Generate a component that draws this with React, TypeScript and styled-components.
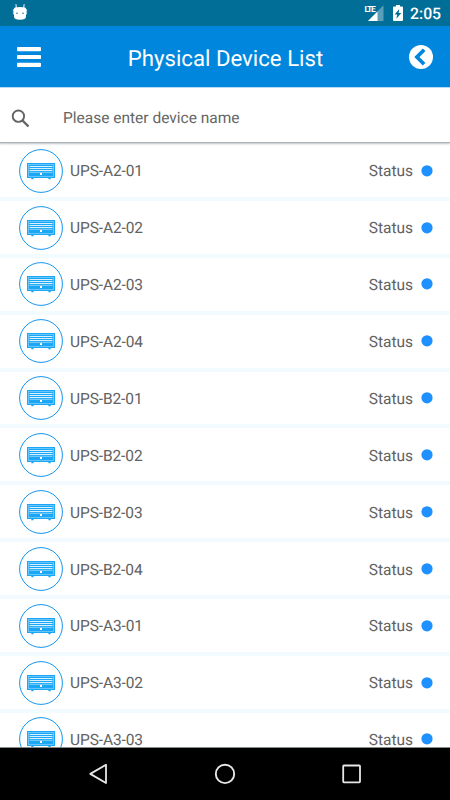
import React from 'react';
import styled, { createGlobalStyle } from 'styled-components';

const GlobalStyle = createGlobalStyle`
  * { box-sizing: border-box; }
  body { margin: 0; background: #fff; font-family: Roboto, sans-serif; text-rendering: geometricPrecision; }
  svg { display: block; flex: none; }
`;

const Screen = styled.div`
  width: 450px;
  height: 800px;
  display: flex;
  flex-direction: column;
  overflow: hidden;
  background: #fff;
`;

const StatusBar = styled.div`
  flex: none;
  height: 26px;
  padding: 0 9px 0 12px;
  display: flex;
  align-items: center;
  justify-content: space-between;
  background: #006e97;
  color: #fff;
`;

const SystemIcons = styled.div`
  display: flex;
  align-items: center;
`;

const BatterySlot = styled.span`
  margin-left: 9px;
`;

const Clock = styled.span`
  margin-left: 7px;
  padding-top: 1px;
  width: 31px;
  font-size: 15.8px;
  line-height: 20px;
  font-weight: 500;
  white-space: nowrap;
`;

const AppBar = styled.header`
  flex: none;
  height: 62px;
  padding: 0 17px;
  display: flex;
  align-items: center;
  justify-content: space-between;
  background: #0087dd;
  border-bottom: 1px solid #b9dcf5;
`;

const Title = styled.h1`
  margin: 0;
  padding: 4px 0 0 1px;
  font-size: 22.2px;
  line-height: 28px;
  font-weight: 400;
  color: #fff;
  white-space: nowrap;
`;

const IconButton = styled.button`
  border: 0;
  padding: 0;
  background: none;
`;

const SearchBar = styled.label`
  flex: none;
  height: 54px;
  padding: 6px 11px 0;
  display: flex;
  align-items: center;
  gap: 33px;
  background: #fff;
  box-shadow: 0 1px 1px #a9b2b8, 0 2px 2px rgba(90, 105, 115, 0.35);
  z-index: 1;
`;

const SearchHint = styled.span`
  font-size: 15.5px;
  line-height: 20px;
  color: #666;
`;

const DeviceList = styled.main`
  flex: 1;
  min-height: 0;
  padding-top: 2px;
  overflow: hidden;
`;

const DeviceRow = styled.div`
  height: 56.875px;
  padding: 0.5px 17px 0 19px;
  display: flex;
  align-items: center;
  border-bottom: 4px solid #f2fbff;
  font-size: 15.5px;
  line-height: 20px;
  color: #626262;
`;

const DeviceName = styled.span`
  flex: 1;
  padding: 1.6px 0 0 7px;
  letter-spacing: -0.1px;
`;

const StatusLabel = styled.span`
  padding-top: 1.6px;
`;

const DotIcon = styled.svg`
  margin-left: 8px;
`;

const NavBar = styled.nav`
  flex: none;
  height: 53px;
  display: flex;
  align-items: center;
  justify-content: space-between;
  padding: 0 86px;
  background: #000;
  border-top: 1px solid #858b87;
`;

const devices = [
  'UPS-A2-01',
  'UPS-A2-02',
  'UPS-A2-03',
  'UPS-A2-04',
  'UPS-B2-01',
  'UPS-B2-02',
  'UPS-B2-03',
  'UPS-B2-04',
  'UPS-A3-01',
  'UPS-A3-02',
  'UPS-A3-03',
];

const AndroidIcon = () => (
  <svg width="16" height="18" viewBox="0 0 16 18">
    <path d="M4.4 4.6 4 .6M11.6 4.6l.5-4" stroke="#d9eef5" strokeWidth="1.1" strokeLinecap="round" />
    <path d="M3 3.5Q8 2.6 13 3.5q1 .2 1 1.4v7.6q0 3.2-6 3.2t-6-3.2V4.9Q2 3.7 3 3.5Z" fill="#fff" />
    <path d="M1.4 5v5.5M14.6 5v5.5" stroke="#b9dbe7" strokeWidth="1" />
    <circle cx="5" cy="9.2" r=".8" fill="#27758f" />
    <circle cx="11" cy="9.2" r=".8" fill="#27758f" />
  </svg>
);

const LteLabel = styled.span`
  align-self: flex-start;
  width: 11px;
  margin: 2px -7.5px 0 0;
  font-size: 8.5px;
  line-height: 10px;
  font-weight: 700;
  letter-spacing: -1.2px;
  z-index: 1;
`;

const SignalIcon = () => (
  <svg width="16" height="16" viewBox="0 0 16 16">
    <path d="M0 16 15.5.3V16Z" fill="#5a9fb9" />
    <path d="M0 16 9.5 6.5V16Z" fill="#fff" />
  </svg>
);

const BatteryIcon = () => (
  <svg width="10" height="16" viewBox="0 0 10 16">
    <path d="M3 0h4v1.6h2q1 0 1 1V15q0 1-1 1H1q-1 0-1-1V2.6q0-1 1-1h2Z" fill="#fff" />
    <path d="M6.2 3.9 1.7 9.6h2.5l-.8 4.2 4.9-5.9H5.7Z" fill="#006e97" />
  </svg>
);

const MenuIcon = () => (
  <svg width="24" height="20" viewBox="0 0 24 20" fill="#fff">
    <rect width="24" height="4.2" rx=".9" />
    <rect y="7.9" width="24" height="4.2" rx=".9" />
    <rect y="15.8" width="24" height="4.2" rx=".9" />
  </svg>
);

const BackCircleIcon = () => (
  <svg width="24" height="24" viewBox="0 0 24 24">
    <circle cx="12" cy="12" r="12" fill="#fff" />
    <path d="m13.8 6.1-5.9 5.9 5.9 5.9" fill="none" stroke="#0087dd" strokeWidth="3.7" strokeLinecap="square" />
  </svg>
);

const SearchIcon = () => (
  <svg width="19" height="19" viewBox="0 0 19 19" fill="none" stroke="#646464">
    <circle cx="7.4" cy="7.2" r="5.7" strokeWidth="1.9" />
    <path d="m11.5 11.5 6 6" strokeWidth="2.4" />
  </svg>
);

const DeviceIcon = () => (
  <svg width="44" height="44" viewBox="0 0 44 44">
    <circle cx="22" cy="22" r="21.4" fill="#fff" stroke="#1495ee" strokeWidth="1" />
    <rect x="8" y="14" width="28" height="15" fill="#1ba6f6" />
    <rect x="9.5" y="15.5" width="25" height="12" fill="none" stroke="#79cdfa" strokeWidth=".8" />
    <path d="M10.5 17.5h23M10.5 19.5h23M10.5 21.5h23" stroke="#d8f1ff" strokeWidth="1" />
    <path d="M10.5 23.3h23" stroke="#a5defc" strokeWidth=".8" />
    <rect x="21" y="24" width="2" height="2" fill="#fff" />
    <path d="M12.3 29.6h2.3M29.4 29.6h2.3" stroke="#1ba6f6" strokeWidth="1.4" />
  </svg>
);

const StatusDot = () => (
  <DotIcon width="12" height="12" viewBox="0 0 12 12">
    <circle cx="6" cy="5.8" r="5.6" fill="#1e90ff" />
  </DotIcon>
);

const BackTriangle = () => (
  <svg width="24" height="24" viewBox="0 0 24 24" fill="none" stroke="#e7e7e7" strokeWidth="1.8">
    <path d="M20 2.8v18.2L4.3 11.9Z" strokeLinejoin="round" />
  </svg>
);

const HomeCircle = () => (
  <svg width="24" height="24" viewBox="0 0 24 24" fill="none" stroke="#e7e7e7" strokeWidth="1.9">
    <circle cx="12" cy="11.9" r="9.2" />
  </svg>
);

const RecentSquare = () => (
  <svg width="24" height="24" viewBox="0 0 24 24" fill="none" stroke="#e7e7e7" strokeWidth="1.8">
    <rect x="3.2" y="3.5" width="16.8" height="16.8" rx=".7" />
  </svg>
);

export default function App() {
  return (
    <Screen>
      <GlobalStyle />
      <StatusBar>
        <AndroidIcon />
        <SystemIcons>
          <LteLabel>LTE</LteLabel>
          <SignalIcon />
          <BatterySlot><BatteryIcon /></BatterySlot>
          <Clock>2:05</Clock>
        </SystemIcons>
      </StatusBar>
      <AppBar>
        <IconButton aria-label="Menu"><MenuIcon /></IconButton>
        <Title>Physical Device List</Title>
        <IconButton aria-label="Back"><BackCircleIcon /></IconButton>
      </AppBar>
      <SearchBar>
        <SearchIcon />
        <SearchHint>Please enter device name</SearchHint>
      </SearchBar>
      <DeviceList>
        {devices.map((name) => (
          <DeviceRow key={name}>
            <DeviceIcon />
            <DeviceName>{name}</DeviceName>
            <StatusLabel>Status</StatusLabel>
            <StatusDot />
          </DeviceRow>
        ))}
      </DeviceList>
      <NavBar>
        <BackTriangle />
        <HomeCircle />
        <RecentSquare />
      </NavBar>
    </Screen>
  );
}
